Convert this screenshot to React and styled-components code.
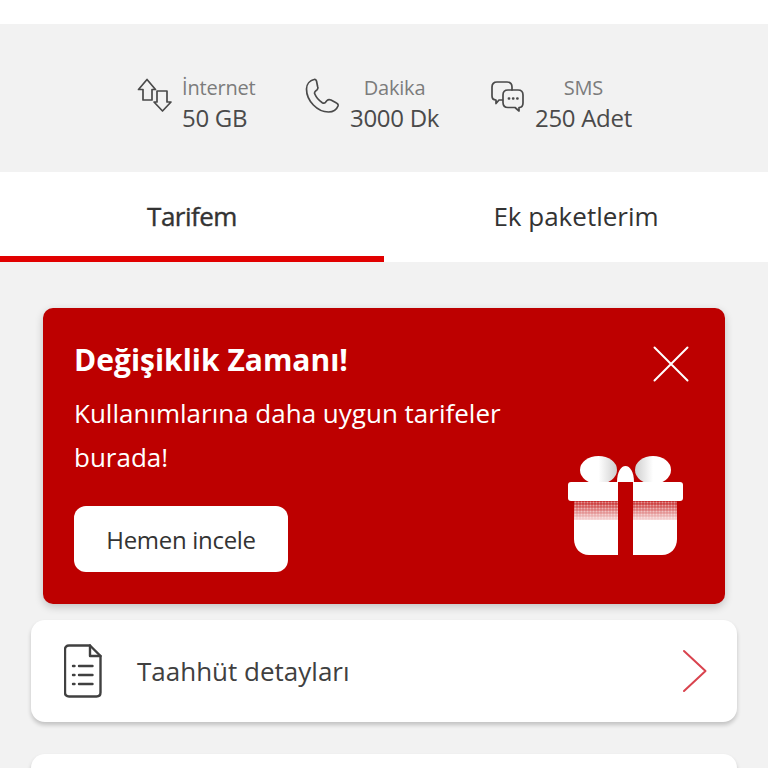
import React, { useState } from 'react'
import styled, { createGlobalStyle } from 'styled-components'

const GlobalStyle = createGlobalStyle`
  html, body {
    margin: 0;
    padding: 0;
    background: #f2f2f2;
    font-family: 'Open Sans', 'Liberation Sans', sans-serif;
    overflow: hidden;
  }
`

const Page = styled.div`
  width: 768px;
  height: 768px;
  overflow: hidden;
  background: #f2f2f2;
`

const TopBar = styled.div`
  height: 24px;
  background: #fff;
`

const Usage = styled.section`
  height: 148px;
  display: flex;
  align-items: flex-start;
  padding: 52px 0 0 137px;
  box-sizing: border-box;
`

const UsageItem = styled.div`
  display: flex;
  align-items: flex-start;
  width: ${props => props.width}px;
`

const UsageIcon = styled.svg`
  flex: none;
  margin: ${props => props.top}px ${props => props.gap}px 0 0;
  fill: none;
  stroke: #4a4a4a;
  stroke-width: 1.7;
  stroke-linejoin: round;
  stroke-linecap: round;
`

const UsageText = styled.div`
  display: flex;
  flex-direction: column;
  align-items: ${props => (props.center ? 'center' : 'flex-start')};
`

const UsageLabel = styled.span`
  font-size: 20px;
  line-height: 24px;
  color: #7c7c7c;
  letter-spacing: -0.2px;
`

const UsageValue = styled.span`
  font-size: 24px;
  line-height: 35px;
  color: #4a4a4a;
  letter-spacing: -0.3px;
`

const Tabs = styled.nav`
  height: 90px;
  display: flex;
  background: #fff;
`

const Tab = styled.button`
  flex: 1;
  border: 0;
  padding: 4px 0 ${props => (props.active ? 0 : 6)}px;
  background: none;
  border-bottom: ${props => (props.active ? '6px solid #e10000' : 'none')};
  font-family: inherit;
  font-size: 26px;
  letter-spacing: ${props => (props.active ? '-0.5px' : '0')};
  color: #333;
  -webkit-text-stroke: ${props => (props.active ? '0.4px #333' : '0')};
`

const Content = styled.main`
  padding: 46px 31px 0;
  display: flex;
  flex-direction: column;
`

const Banner = styled.section`
  margin: 0 12px 16px;
  height: 296px;
  box-sizing: border-box;
  padding: 31px 36px 31px 31px;
  display: flex;
  justify-content: space-between;
  background: #bd0000;
  border-radius: 10px;
  box-shadow: 0 3px 8px rgba(0, 0, 0, 0.2);
  color: #fff;
`

const BannerBody = styled.div`
  display: flex;
  flex-direction: column;
  align-items: flex-start;
`

const BannerTitle = styled.h2`
  margin: 0;
  font-size: 30px;
  line-height: 42px;
  font-weight: 700;
  letter-spacing: 0;
`

const BannerText = styled.p`
  margin: 10px 0 0;
  width: 460px;
  font-size: 26px;
  line-height: 44px;
`

const BannerButton = styled.button`
  margin-top: 27px;
  width: 214px;
  height: 66px;
  border: 0;
  border-radius: 12px;
  background: #fff;
  color: #333;
  font-family: inherit;
  font-size: 24px;
  letter-spacing: -0.3px;
`

const BannerSide = styled.div`
  display: flex;
  flex-direction: column;
  align-items: flex-end;
  justify-content: space-between;
`

const CloseButton = styled.button`
  width: 36px;
  height: 36px;
  margin-top: 7px;
  border: 0;
  padding: 0;
  background: none;
  display: block;
  line-height: 0;
`

const GiftArt = styled.svg`
  margin: 0 5px 17px 0;
`

const Card = styled.div`
  display: flex;
  align-items: center;
  height: 102px;
  flex: none;
  box-sizing: border-box;
  padding: 0 29px 0 33px;
  margin-bottom: 32px;
  background: #fff;
  border-radius: 14px;
  box-shadow: 0 3px 4px rgba(0, 0, 0, 0.2);
`

const CardLabel = styled.span`
  flex: 1;
  margin-left: 35px;
  font-size: 26px;
  color: #404040;
`

const stats = [
  { label: 'İnternet', value: '50 GB', width: 168, gap: 9, top: 2, icon: 'data' },
  { label: 'Dakika', value: '3000 Dk', width: 185, gap: 10, top: 2, icon: 'phone', center: true },
  { label: 'SMS', value: '250 Adet', width: 160, gap: 10, top: 5, icon: 'sms', center: true },
]

function StatIcon({ type, gap, top }) {
  if (type === 'data') {
    return (
      <UsageIcon width="36" height="36" viewBox="0 0 36 36" gap={gap} top={top}>
        <path d="M1.500 11.500 10 1.500l8.500 10H15V22H6V11.500z" />
        <path d="M20 13h10v11h4l-8.500 9-8.500-9h3z" />
      </UsageIcon>
    )
  }
  if (type === 'phone') {
    return (
      <UsageIcon width="35" height="36" viewBox="0 0 35 36" gap={gap} top={top}>
        <path d="M9 1.500C5 2.500 1.500 6 1.500 11c0 12 11 23 22 23 4.500 0 8-2 9.500-6 .5-1.500-.5-2.500-1.500-3l-5.500-3c-1.500-.7-3-.5-4 .5l-1.500 1.800c-1 1-2 1.100-3.200.4-3-1.900-6-5.200-7.500-8.700-.5-1.200-.3-2 .7-2.900l1.500-1.300c1-1 1.200-2 .6-3.300L11.500 3C11 1.700 10 1.200 9 1.500z" />
      </UsageIcon>
    )
  }
  return (
    <UsageIcon width="35" height="32" viewBox="0 0 35 32" gap={gap} top={top}>
      <path d="M12.500 19H9l-3 3.500V19C3.500 19 2 17.500 2 15V6c0-3 2-5 5-5h10c3 0 5 2 5 5v3" />
      <path d="M18 9h10c3 0 5 2 5 5v8c0 3-2 4.500-4 4.500V30l-4-3.500h-7c-3 0-5-2-5-5V14c0-3 2-5 5-5z" />
      <path d="M18.800 17.500h.4M23 17.500h.4M27.200 17.500h.4" strokeWidth="2.400" />
    </UsageIcon>
  )
}

function GiftIcon() {
  return (
    <GiftArt width="116" height="100" viewBox="0 0 116 100">
      <defs>
        <pattern id="dots" width="3" height="3" patternUnits="userSpaceOnUse">
          <circle cx="1.500" cy="1.500" r="1.100" fill="#fff" />
        </pattern>
        <linearGradient id="fade" x1="0" x2="0" y1="0" y2="1">
          <stop offset="0" stopColor="#c52020" />
          <stop offset="1" stopColor="#f6d6d6" />
        </linearGradient>
        <linearGradient id="bowLeft" x1="0" x2="1" y1="0" y2="0">
          <stop offset="0.5" stopColor="#fff" />
          <stop offset="1" stopColor="#cfcfcf" />
        </linearGradient>
        <linearGradient id="bowRight" x1="1" x2="0" y1="0" y2="0">
          <stop offset="0.5" stopColor="#fff" />
          <stop offset="1" stopColor="#cfcfcf" />
        </linearGradient>
      </defs>
      <ellipse cx="30.500" cy="14" rx="18.500" ry="14" fill="url(#bowLeft)" />
      <ellipse cx="85" cy="14" rx="18" ry="14" fill="url(#bowRight)" />
      <path d="M49 26c0-10 4-16 8.500-16S66 16 66 26z" fill="#fff" />
      <rect x="0" y="26" width="115" height="19" rx="3" fill="#fff" />
      <path d="M6 45h103v38c0 9-6 16-15 16H21C12 99 6 92 6 83z" fill="#fff" />
      <rect x="6" y="45" width="103" height="19" fill="url(#fade)" />
      <rect x="6" y="45" width="103" height="19" fill="url(#dots)" opacity="0.5" />
      <rect x="50" y="26" width="15" height="74" fill="#bd0000" />
    </GiftArt>
  )
}

export default function App() {
  const [activeTab] = useState('tarifem')

  return (
    <Page>
      <GlobalStyle />
      <TopBar />
      <Usage>
        {stats.map(item => (
          <UsageItem key={item.label} width={item.width}>
            <StatIcon type={item.icon} gap={item.gap} top={item.top} />
            <UsageText center={item.center}>
              <UsageLabel>{item.label}</UsageLabel>
              <UsageValue>{item.value}</UsageValue>
            </UsageText>
          </UsageItem>
        ))}
      </Usage>
      <Tabs>
        <Tab active={activeTab === 'tarifem'}>Tarifem</Tab>
        <Tab active={activeTab === 'ek'}>Ek paketlerim</Tab>
      </Tabs>
      <Content>
        <Banner>
          <BannerBody>
            <BannerTitle>Değişiklik Zamanı!</BannerTitle>
            <BannerText>Kullanımlarına daha uygun tarifeler burada!</BannerText>
            <BannerButton>Hemen incele</BannerButton>
          </BannerBody>
          <BannerSide>
            <CloseButton aria-label="Kapat">
              <svg width="36" height="36" viewBox="0 0 36 36" stroke="#fff" strokeWidth="2" strokeLinecap="round">
                <path d="M1.500 1.500 34.500 34.500M34.500 1.500 1.500 34.500" />
              </svg>
            </CloseButton>
            <GiftIcon />
          </BannerSide>
        </Banner>
        <Card>
          <svg width="38" height="54" viewBox="0 0 38 54" fill="none" stroke="#404040" strokeWidth="2.400" strokeLinecap="round" strokeLinejoin="round">
            <path d="M5 1.500h21L36.500 12v36.500c0 2.500-1.500 4-4 4H5c-2.500 0-4-1.500-4-4V5.500c0-2.500 1.500-4 4-4z" />
            <path d="M26 1.500V12h10.500" />
            <path d="M9 22h1.500M15 22h13.500M9 31h1.500M15 31h13.500M9 40h1.500M15 40h13.500" />
          </svg>
          <CardLabel>Taahhüt detayları</CardLabel>
          <svg width="26" height="44" viewBox="0 0 26 44" fill="none" stroke="#d9434e" strokeWidth="2" strokeLinecap="round" strokeLinejoin="round">
            <path d="M2 2 23.500 22 2 42" />
          </svg>
        </Card>
        <Card />
      </Content>
    </Page>
  )
}
